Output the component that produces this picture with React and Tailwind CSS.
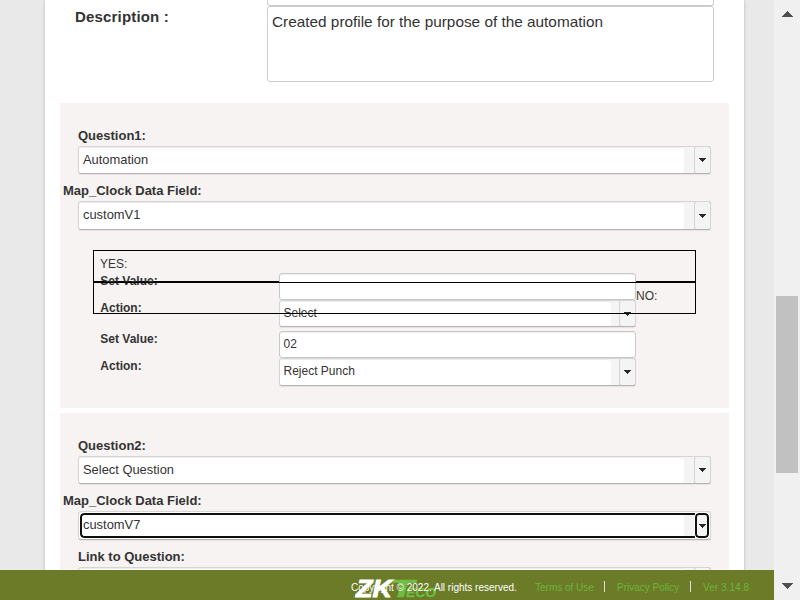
import React from "react";

function Caret() {
  return (
    <svg width="8" height="4" viewBox="0 0 8 4" shapeRendering="crispEdges">
      <path d="M0 0h7v1h-1v1h-1v1h-1v1h-1v-1h-1v-1h-1v-1h-1z" fill="#2b2b2b" />
    </svg>
  );
}

function Select({ value, className = "", small = false, focused = false }) {
  return (
    <div
      className={`relative flex rounded-[3px] border border-[#d5d5d5] border-b-[#b4b4b4] bg-[#f4f4f4] text-[#333] shadow-[0_1px_1px_#e6e2e1] ${className}`}
    >
      <div
        className={`flex-1 rounded-[3px] border-t border-[#ececec] bg-white whitespace-nowrap ${
          small ? "pl-[3.5px] text-[12px] leading-[22px]" : "pl-1 text-[12.9px] leading-[24px]"
        }`}
      >
        {value}
      </div>
      <div className={small ? "w-[8px]" : "w-[10px]"} />
      <div className="-my-px -mr-px flex w-[17px] items-center justify-center rounded-[3px] border border-[#d5d5d5] border-b-[#b4b4b4] bg-[#f4f4f4] pl-px">
        <Caret />
      </div>
      {focused && (
        <>
          <div className="absolute top-px right-[15px] bottom-px left-px rounded-l-[4px] border-2 border-r-0 border-[#101010] outline outline-1 outline-white" />
          <div className="absolute top-px right-px bottom-px w-[14px] rounded-[4px] border-2 border-[#101010] outline outline-1 outline-white" />
        </>
      )}
    </div>
  );
}

function Label({ children, className = "" }) {
  return (
    <div className={`text-[13px] leading-[16px] font-bold whitespace-nowrap text-[#333] ${className}`}>
      {children}
    </div>
  );
}

function AnswerRow({ label, className = "", children }) {
  return (
    <div className={`flex ${className}`}>
      <div className="w-[219px] shrink-0 pl-[40.3px] text-[12px] leading-[16px] font-bold text-[#333]">{label}</div>
      {children}
    </div>
  );
}

function TextBox({ value }) {
  return (
    <div className="h-[27px] w-[357px] rounded-[3px] border border-[#c8c8c8] bg-white pl-[3.5px] text-[12px] leading-[25px] text-[#333] shadow-[inset_0_1px_1px_#eeeeee]">
      {value}
    </div>
  );
}

function ScrollBar() {
  return (
    <div className="flex h-full w-[26px] shrink-0 flex-col items-center bg-[#f0f0f0]">
      <svg className="mt-[11px] h-[6px] w-[12px] shrink-0" viewBox="0 0 12 6" shapeRendering="crispEdges">
        <path d="M0 6L6 0L12 6z" fill="#505050" />
      </svg>
      <div className="mt-[279px] h-[177px] w-[22px] bg-[#c1c1c1]" />
      <svg className="mt-[110px] h-[6px] w-[12px] shrink-0" viewBox="0 0 12 6" shapeRendering="crispEdges">
        <path d="M0 0L6 6L12 0z" fill="#505050" />
      </svg>
    </div>
  );
}

function Logo() {
  return (
    <svg
      className="absolute top-0 left-[350px] h-[30px] w-[90px] overflow-visible font-bold italic"
      viewBox="0 0 90 30"
    >
      <text x="6" y="27" fontSize="24.5" textLength="36" lengthAdjust="spacingAndGlyphs" fill="#fff" stroke="#fff" strokeWidth="0.9">
        ZK
      </text>
      <text x="41" y="27" fontSize="24.5" textLength="23" lengthAdjust="spacingAndGlyphs" fill="#6fbe44" stroke="#6fbe44" strokeWidth="0.7">
        T
      </text>
      <text x="56" y="27" fontSize="12.5" textLength="30" lengthAdjust="spacingAndGlyphs" fill="#6fbe44" stroke="#6fbe44" strokeWidth="0.3">
        ECO
      </text>
    </svg>
  );
}

function Footer() {
  return (
    <div className="relative h-[30px] w-full shrink-0 bg-[#6b7b27] text-[10px]">
      <Logo />
      <div className="relative flex h-full items-center pt-[4px] pl-[351px] whitespace-nowrap text-[#6fb33a]">
        <span className="w-[184px] text-white">Copyright © 2022. All rights reserved.</span>
        <span className="w-[69px]">Terms of Use</span>
        <span className="mb-[2px] h-[11px] w-px bg-[#dddddd]" />
        <span className="w-[85px] pl-[12px]">Privacy Policy</span>
        <span className="mb-[2px] h-[11px] w-px bg-[#dddddd]" />
        <span className="pl-[12px] tracking-[0.05px]">Ver 3.14.8</span>
      </div>
    </div>
  );
}

export default function App() {
  return (
    <div className="flex h-[600px] w-[800px] overflow-hidden bg-[#e9e9e9] font-['Liberation_Sans',Arial,sans-serif] text-[#333]">
      <div className="flex h-full w-[774px] flex-col">
        <div className="h-[570px] w-full overflow-hidden pl-[45px]">
          <div className="h-[580px] w-[699px] bg-white px-[15px] shadow-[0_0_3px_#b5b5b5]">
            <div className="flex h-[103px] pl-[15px]">
              <div className="w-[192px] pt-[8px] text-[15px] leading-[18px] font-bold tracking-[0.17px]">Description :</div>
              <div className="flex w-[447px] flex-col">
                <div className="h-[6px] rounded-b-[3px] border border-t-0 border-[#ccc]" />
                <div className="h-[76px] rounded-[3px] border border-[#ccc] pt-[6px] pl-1 text-[15.35px] leading-[18px] whitespace-nowrap">
                  Created profile for the purpose of the automation
                </div>
              </div>
            </div>

            <div className="relative h-[305px] w-[669px] bg-[#f7f3f2] pt-[25px]">
              <Label className="pl-[18px]">Question1:</Label>
              <Select value="Automation" className="mt-[2px] ml-[18px] h-[28px] w-[633px]" />
              <Label className="mt-[9px] pl-[3px]">Map_Clock Data Field:</Label>
              <Select value="customV1" className="mt-[2px] ml-[18px] h-[29px] w-[633px]" />

              <div className="absolute top-[147px] left-[33px] h-[32px] w-[603px] border border-black pl-[6px] text-[12px] leading-[26px]">
                YES:
              </div>
              <div className="relative pt-[43px]">
                <AnswerRow label="Set Value:">
                  <TextBox value="" />
                </AnswerRow>
                <AnswerRow label="Action:">
                  <Select value="Select" small className="h-[27px] w-[357px]" />
                </AnswerRow>
                <AnswerRow label="Set Value:" className="mt-[4px]">
                  <TextBox value="02" />
                </AnswerRow>
                <AnswerRow label="Action:">
                  <Select value="Reject Punch" small className="h-[28px] w-[357px]" />
                </AnswerRow>
              </div>
              <div className="absolute top-[179px] left-[33px] h-[32px] w-[603px] border border-black pl-[542px] text-[12px] leading-[26px]">
                NO:
              </div>
            </div>

            <div className="mt-[5px] h-[200px] w-[669px] bg-[#f7f3f2] pt-[25px]">
              <Label className="pl-[18px]">Question2:</Label>
              <Select value="Select Question" className="mt-[2px] ml-[18px] h-[28px] w-[633px]" />
              <Label className="mt-[9px] pl-[3px]">Map_Clock Data Field:</Label>
              <Select value="customV7" focused className="mt-[2px] ml-[18px] h-[29px] w-[633px]" />
              <Label className="mt-[9px] pl-[18px]">Link to Question:</Label>
              <Select value="" className="mt-[2px] ml-[18px] h-[28px] w-[633px]" />
            </div>
          </div>
        </div>
        <Footer />
      </div>
      <ScrollBar />
    </div>
  );
}
